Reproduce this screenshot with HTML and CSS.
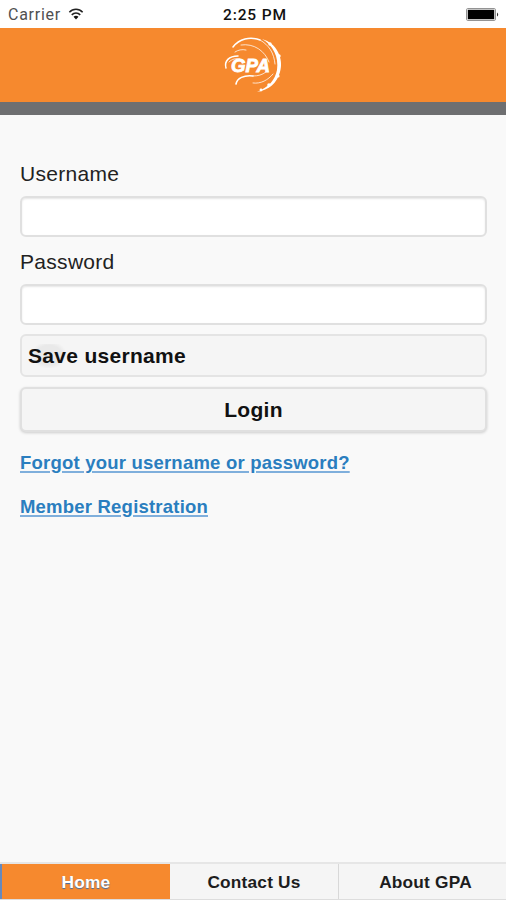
FILE: index.html
```html
<!DOCTYPE html>
<html lang="en">
<head>
<meta charset="utf-8">
<title>GPA Login</title>
<link rel="stylesheet" href="styles.css">
</head>
<body>
<div class="status">
  <div class="carrier"><span>Carrier</span>
    <svg class="wifi" width="16" height="12" viewBox="0 0 16 13" fill="none" stroke="#222" stroke-width="1.7"><path d="M.8 4.6C4.8.4 11.2.4 15.2 4.6M3.4 7.4c2.6-2.7 6.6-2.7 9.2 0"/><path d="M5.3 9.5q2.7-2.2 5.4 0L8 12.4z" fill="#111" stroke="none"/></svg>
  </div>
  <time>2:25 PM</time>
  <svg class="battery" width="34" height="13" viewBox="0 0 34 13"><rect x=".6" y=".6" width="28.8" height="11.8" rx="1" fill="#fff" stroke="#888" stroke-width="1"/><rect x="1.8" y="1.8" width="26.4" height="9.4"/><path d="M31 4.4q2.4 2.1 0 4.2z" fill="#333"/></svg>
</div>
<header class="header">
  <svg width="60" height="58" viewBox="0 0 60 58" role="img" aria-label="GPA">
    <g fill="none" stroke="#fff" stroke-linecap="round">
      <path stroke-width="1.5" d="M10 10C16 2 27-1 37 3"/>
      <path stroke-width="1" opacity=".75" d="M37 3C46 8 51 16 52 27M18 8C31 6 42 14 46 25"/>
      <path stroke-width="1.5" d="M3 31C1 24 6 19 15 19"/>
      <path stroke-width="1" opacity=".75" d="M6 25C9 22 13 21 17 22M12 15C15 13 19 12 23 13"/>
      <path stroke-width="1.6" d="M13 47C14 41 21 38 30 39"/>
      <path stroke-width="1" opacity=".75" d="M30 39C35 39 39 38 43 35M30 46C38 47 45 43 50 37"/>
    </g>
    <g fill="#fff">
      <path d="M39 2C54 6 61 22 57 35 54 46 46 53 34 55 46 50 52 43 54 33 56 20 50 8 39 2Z"/>
      <circle cx="47" cy="7" r="1.7"/><circle cx="56" cy="19" r="1.7"/><circle cx="55" cy="39" r="1.6"/><circle cx="46" cy="48" r="1.8"/><circle cx="38" cy="53" r="1.4"/>
    </g>
    <text class="logo-text" x="8" y="35" textLength="39" lengthAdjust="spacingAndGlyphs">GPA</text>
  </svg>
</header>
<main class="main">
  <label class="label" for="user">Username</label>
  <input class="field" id="user" type="text">
  <label class="label" for="pass">Password</label>
  <input class="field" id="pass" type="password">
  <div class="box save"><span>Save username</span></div>
  <button class="box login" type="button">Login</button>
  <a class="link forgot" href="#">Forgot your username or password?</a>
  <a class="link register" href="#">Member Registration</a>
</main>
<nav class="tabs">
  <a class="tab active" href="#">Home</a>
  <a class="tab" href="#">Contact Us</a>
  <a class="tab" href="#">About GPA</a>
</nav>
</body>
</html>
```
FILE: styles.css
```css
* { box-sizing: border-box; }
body {
  margin: 0;
  height: 900px;
  display: flex;
  flex-direction: column;
  overflow: hidden;
  background: #f9f9f9;
  color: #222;
  font-family: "Liberation Sans", Arial, sans-serif;
}
.status {
  height: 28px;
  display: grid;
  grid-template-columns: 1fr auto 1fr;
  align-items: center;
  padding: 0 6px 0 8px;
  background: #fff;
}
.carrier {
  display: flex;
  align-items: center;
  gap: 7px;
  color: #505050;
  font: 16px "Roboto", sans-serif;
  letter-spacing: .75px;
}
.status time {
  padding: 1px 0 0 2px;
  color: #111;
  font: 500 15.5px "Roboto", sans-serif;
  letter-spacing: .9px;
}
.battery { justify-self: end; }
.header {
  height: 87px;
  display: flex;
  justify-content: center;
  padding-top: 9px;
  background: #f6892e;
  border-bottom: 13px solid #6e6f71;
}
.header svg { overflow: visible; }
.logo-text {
  font: italic 900 18px "Liberation Sans", Arial, sans-serif;
  fill: #fff;
  stroke: #fff;
  stroke-width: .8px;
}
.main {
  flex: 1;
  display: flex;
  flex-direction: column;
  align-items: flex-start;
  padding: 45px 19px 0 20px;
}
.label {
  height: 36px;
  line-height: 27px;
  font-size: 21px;
  letter-spacing: .3px;
}
.field {
  width: 100%;
  height: 41px;
  margin: 0 0 11px;
  background: #fff;
  border: 2px solid #e0e0e0;
  border-radius: 6px;
  box-shadow: inset 0 1px 2px rgba(0, 0, 0, .1);
}
.box {
  width: 100%;
  height: 43px;
  display: flex;
  align-items: center;
  background: #f5f5f5;
  border: 2px solid #e4e4e4;
  border-radius: 6px;
  color: #111;
  font: bold 21px "Liberation Sans", Arial, sans-serif;
  letter-spacing: .3px;
}
.save {
  margin-top: -2px;
  padding-left: 6px;
}
.save span {
  background: radial-gradient(ellipse 18px 14px at 21px 11px, #e9e9e9 70%, transparent 100%);
}
.login {
  height: 45px;
  margin-top: 10px;
  justify-content: center;
  border-color: #e0e0e0;
  box-shadow: 0 1px 3px rgba(0, 0, 0, .18);
}
.link {
  height: 44px;
  line-height: 24px;
  color: #2a7ebf;
  font-size: 18.5px;
  font-weight: bold;
  letter-spacing: .21px;
  text-decoration-color: #7fafdc;
  text-decoration-thickness: 2px;
  text-underline-offset: 2px;
}
.forgot { margin-top: 19px; }
.tabs {
  height: 38px;
  display: grid;
  grid-template-columns: 170px 169px 1fr;
  background: #f5f5f5;
  border-top: 2px solid #e6e6e6;
  border-bottom: 1px solid #ddd;
}
.tab {
  display: flex;
  align-items: center;
  justify-content: center;
  padding-top: 2px;
  color: #1d1d1d;
  font-size: 17.3px;
  font-weight: bold;
  letter-spacing: .2px;
  text-decoration: none;
  border-right: 1px solid #d8d8d8;
}
.tab:last-child { border-right: 0; padding-left: 6px; }
.active {
  color: #fff;
  background: #f6892e;
  border-left: 2px solid #6689bd;
  border-right: 0;
  text-shadow: 0 1px 1px #3f6da5;
}
```
